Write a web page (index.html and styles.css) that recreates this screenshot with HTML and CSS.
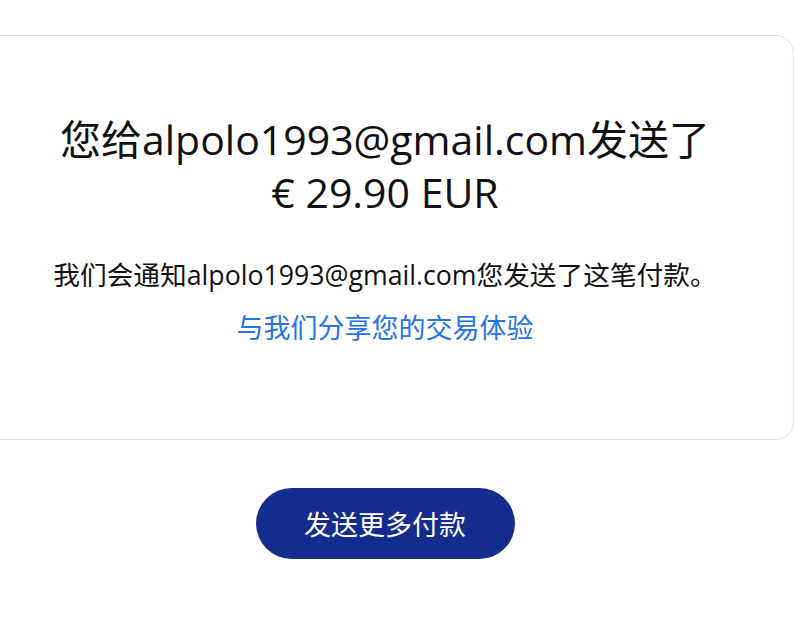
FILE: index.html
```html
<!DOCTYPE html>
<html lang="zh">
<head>
<meta charset="utf-8">
<link rel="stylesheet" href="styles.css">
</head>
<body>
<main class="page">
  <section class="card">
    <h1 class="title">您给alpolo1993@gmail.com发送了<br>€ 29.90 EUR</h1>
    <p class="note">我们会通知alpolo1993@gmail.com您发送了这笔付款。</p>
    <a class="share" href="#">与我们分享您的交易体验</a>
  </section>
  <div class="actions">
    <a class="btn" href="#">发送更多付款</a>
  </div>
</main>
</body>
</html>
```
FILE: styles.css
```css
html, body {
  margin: 0;
  padding: 0;
  background: #fff;
  overflow: hidden;
}
body {
  font-family: "Open Sans", "Noto Sans CJK SC", sans-serif;
  color: #111;
}
.page {
  padding-top: 35px;
}
.card {
  box-sizing: border-box;
  width: 818px;
  margin-left: -24px;
  height: 405px;
  border: 1px solid #dcdbd5;
  border-radius: 18px;
  display: flex;
  flex-direction: column;
  align-items: center;
  text-align: center;
  padding-top: 77px;
}
.title {
  margin: 0;
  font-weight: 400;
  font-size: 41px;
  line-height: 53px;
  color: #111;
}
.note {
  margin: 39px 0 0;
  font-size: 26.7px;
  line-height: 34px;
}
.share {
  margin-top: 19px;
  font-size: 27px;
  line-height: 34px;
  color: #2474e5;
  text-decoration: none;
}
.actions {
  display: flex;
  justify-content: center;
  margin-top: 48px;
  margin-left: -24px;
}
.btn {
  display: flex;
  align-items: center;
  justify-content: center;
  width: 259px;
  height: 71px;
  border-radius: 36px;
  background: #142c8e;
  color: #fff;
  font-size: 27px;
  text-decoration: none;
}
```
